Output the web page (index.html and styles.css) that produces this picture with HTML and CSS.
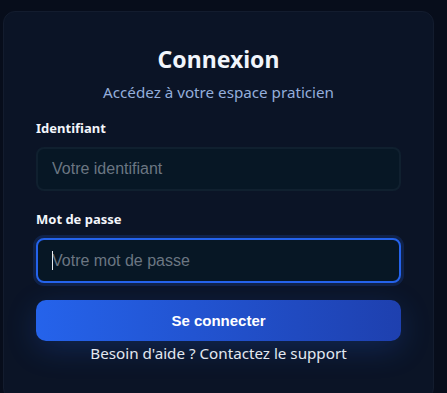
FILE: index.html
```html
<!DOCTYPE html>
<html lang="fr">
<head>
<meta charset="utf-8">
<title>Connexion</title>
<link rel="stylesheet" href="styles.css">
</head>
<body>
<div class="page">
  <div class="card">
    <h1 class="title">Connexion</h1>
    <p class="subtitle">Accédez à votre espace praticien</p>
    <label class="label label-first" for="id">Identifiant</label>
    <input class="field" id="id" type="text" placeholder="Votre identifiant">
    <label class="label" for="pw">Mot de passe</label>
    <div class="field-wrap">
      <input class="field field-focus" id="pw" type="password" placeholder="Votre mot de passe">
      <span class="caret"></span>
    </div>
    <button class="btn" type="button">Se connecter</button>
    <p class="help">Besoin d'aide ? Contactez le support</p>
  </div>
</div>
</body>
</html>
```

FILE: styles.css
```css
html, body {
  margin: 0;
  padding: 0;
  background: #070d1b;
  height: 100%;
  overflow: hidden;
}
.page {
  padding: 11px 0 0 3px;
}
.card {
  width: 431px;
  box-sizing: border-box;
  background: #0b1426;
  border: 1px solid #131c2e;
  border-radius: 12px;
  padding: 32px 32px 36px;
  font-family: "Noto Sans", sans-serif;
  display: flex;
  flex-direction: column;
}
.title {
  margin: 0;
  text-align: center;
  font-size: 23px;
  line-height: 30px;
  font-weight: 700;
  color: #f1f5fb;
}
.subtitle {
  margin: 8px 0 0;
  text-align: center;
  font-size: 15.2px;
  line-height: 20px;
  color: #94aedb;
}
.label {
  display: block;
  margin-top: 19px;
  font-size: 13px;
  line-height: 18px;
  font-weight: 700;
  color: #f3f6fb;
}
.label-first {
  margin-top: 17px;
}
.field {
  margin-top: 10px;
  display: block;
  width: 100%;
  box-sizing: border-box;
  height: 44px;
  padding: 0 14px;
  background: #071725;
  border: 2px solid #10202f;
  border-radius: 8px;
  font-family: "Liberation Sans", Arial, sans-serif;
  font-size: 16px;
  color: #e5e7eb;
  outline: none;
}
.field::placeholder {
  color: #6b7682;
}
.field-wrap {
  position: relative;
  margin-top: 10px;
}
.field-wrap .field {
  margin-top: 0;
}
.field-focus {
  height: 45px;
  border-color: #2563eb;
  box-shadow: 0 0 0 3px rgba(37, 99, 235, 0.18);
}
.caret {
  position: absolute;
  left: 16px;
  top: 13px;
  width: 1px;
  height: 19px;
  background: #e8ecf2;
}
.btn {
  margin-top: 17px;
  height: 41px;
  border: none;
  border-radius: 10px;
  background: linear-gradient(90deg, #2563eb, #1e40af);
  color: #ffffff;
  font-family: "Liberation Sans", Arial, sans-serif;
  font-size: 15px;
  font-weight: 700;
  box-shadow: 0 8px 30px rgba(37, 99, 235, 0.22);
  cursor: pointer;
}
.help {
  margin: 2px 0 0;
  text-align: center;
  font-size: 15.2px;
  line-height: 20px;
  color: #e2e8f0;
}
```
